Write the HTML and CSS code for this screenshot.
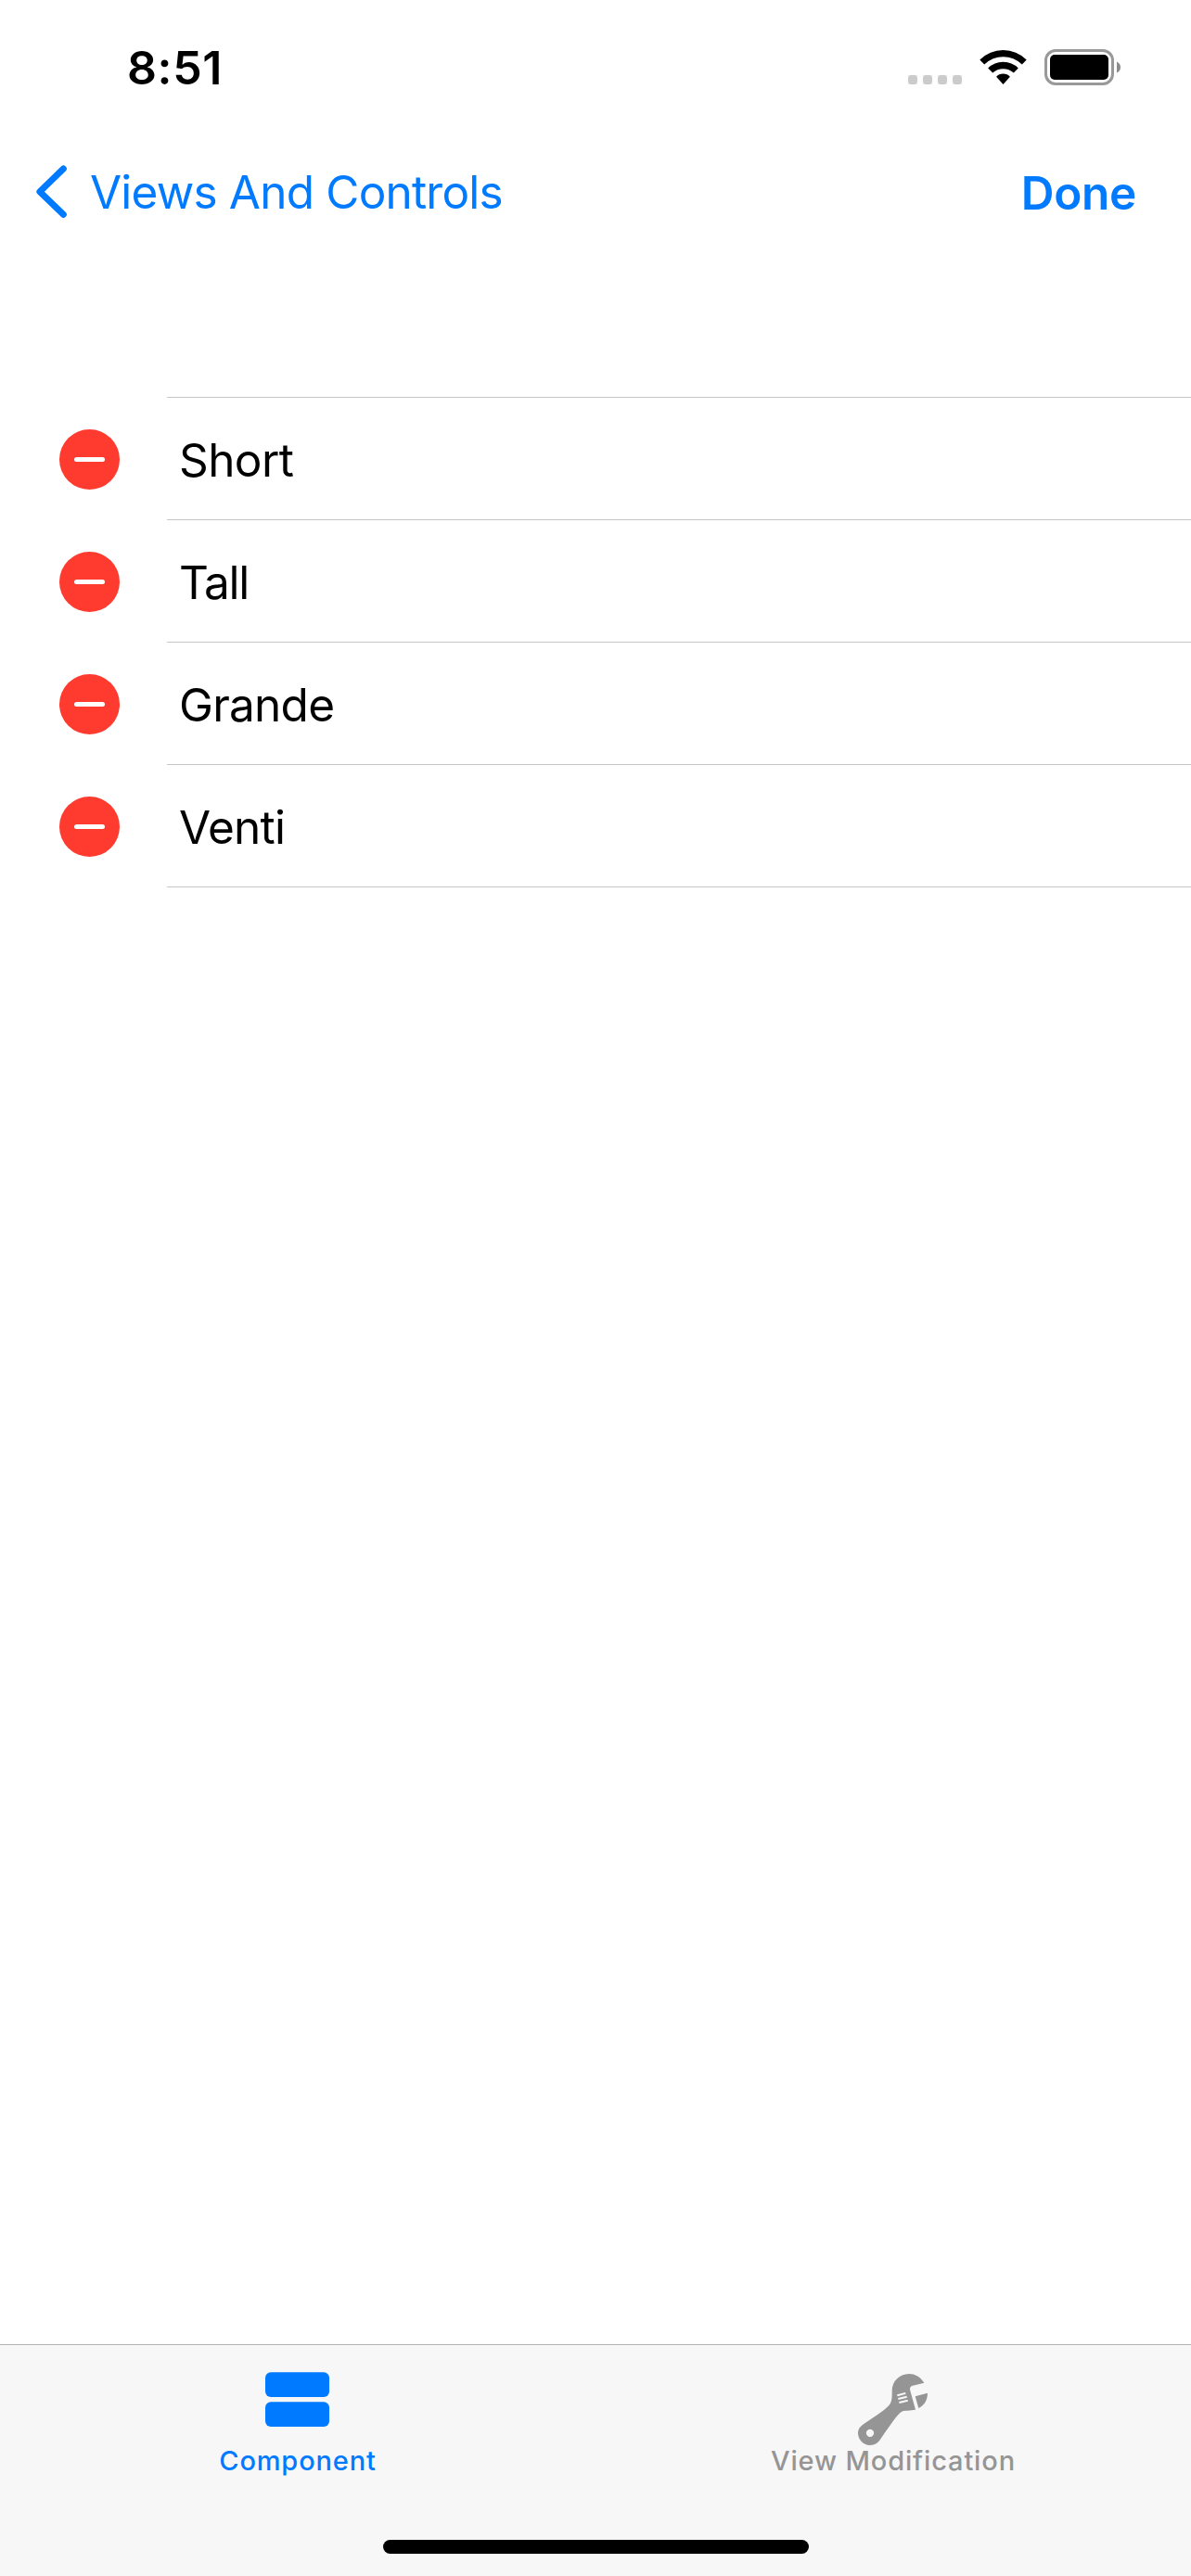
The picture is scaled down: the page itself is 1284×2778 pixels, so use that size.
FILE: index.html
```html
<!DOCTYPE html>
<html lang="en">
<head>
<meta charset="utf-8">
<title>Sizes</title>
<link rel="stylesheet" href="styles.css">
</head>
<body>
<div class="screen">
  <header class="status">
    <span class="clock">8:51</span>
    <svg class="indicators" width="230" height="40" viewBox="979 53 230 40" aria-hidden="true">
      <g fill="#cbcbcb"><rect x="979" y="81" width="10" height="10" rx="3"/><rect x="995" y="81" width="10" height="10" rx="3"/><rect x="1011" y="81" width="10" height="10" rx="3"/><rect x="1027" y="81" width="10" height="10" rx="3"/></g>
      <path d="M1056.300 64.600Q1067 54 1081.500 54Q1096 54 1106.700 64.600L1101.800 69.500Q1093 61.300 1081.500 61.300Q1070 61.300 1061.200 69.500Z"/>
      <path d="M1065.200 73.500Q1072 66.800 1081.500 66.800Q1091 66.800 1097.800 73.500L1092.800 78.500Q1088 74.200 1081.500 74.200Q1075 74.200 1070.200 78.500Z"/>
      <path d="M1074.100 82.700Q1077 79.600 1081.500 79.600Q1086 79.600 1088.900 82.700L1081.500 91Z"/>
      <rect x="1127.500" y="54.500" width="72" height="36" rx="10.500" fill="none" stroke="#999" stroke-width="3"/>
      <rect x="1132" y="59" width="63" height="27" rx="5"/>
      <path d="M1204 66.500Q1208 68.500 1208 72.500Q1208 76.500 1204 78.500Z" fill="#8c8c8c"/>
    </svg>
  </header>
  <nav class="navbar">
    <a class="back">
      <svg class="chevron" width="34" height="58" viewBox="0 0 34 58" aria-hidden="true"><path d="M29.300 4L3.900 28.700L29.300 53.300" fill="none" stroke="#007aff" stroke-width="7" stroke-linecap="round" stroke-linejoin="round"/></svg>
      <span class="back-label">Views And Controls</span>
    </a>
    <a class="done">Done</a>
  </nav>
  <ul class="list">
    <li class="row"><span class="delete"></span><span class="cell short">Short</span></li>
    <li class="row"><span class="delete"></span><span class="cell tall">Tall</span></li>
    <li class="row"><span class="delete"></span><span class="cell grande">Grande</span></li>
    <li class="row"><span class="delete"></span><span class="cell venti">Venti</span></li>
  </ul>
  <footer class="tabbar">
    <div class="tabs">
      <a class="tab active">
        <span class="icon"><svg width="70" height="59" viewBox="0 0 70 59" aria-hidden="true"><rect y="0.300" width="69" height="26.700" rx="6"/><rect y="32.300" width="69" height="26.700" rx="6"/></svg></span>
        <span class="label">Component</span>
      </a>
      <a class="tab">
        <span class="icon wrench"><svg width="76" height="77" viewBox="375 150 228 231" aria-hidden="true"><path fill-rule="evenodd" d="M589 179C577 160 560 150 540 150C508 151 485 174 485 205C485 224 485 237 479 247C468 264 434 285 397 310C382 320 375 328 375 343C376 364 393 381 414 381C428 381 438 375 446 364C468 332 493 294 511 276C518 269 525 269 535 269L561 266L543 201Q542 190 552 188ZM501 217L528 210L530 215L503 223ZM504 228L532 221L534 227L506 234ZM507 240L535 233L537 239L509 246ZM414 329A12.500 12.500 0 1 0 414 354A12.500 12.500 0 1 0 414 329ZM560 223L600 212C600 235 589 252 571 261Z"/></svg></span>
        <span class="label">View Modification</span>
      </a>
    </div>
    <div class="home"></div>
  </footer>
</div>
</body>
</html>
```
FILE: styles.css
```css
* { box-sizing: border-box; }
body { margin: 0; background: #fff; color: #000; font-family: Inter, "Liberation Sans", sans-serif; }
.screen { width: 1284px; height: 2778px; display: flex; flex-direction: column; overflow: hidden; }
.status { height: 141px; padding: 53px 75px 0 137px; display: flex; justify-content: space-between; align-items: flex-start; }
.clock { font-size: 50px; font-weight: 600; line-height: 40px; letter-spacing: 0.6px; }
.indicators { display: block; }
.navbar { height: 132px; padding: 0 59px 0 39px; display: flex; justify-content: space-between; align-items: center; color: #007aff; font-size: 49.5px; line-height: 60px; }
.back { display: flex; align-items: center; gap: 24px; }
.chevron { display: block; }
.back-label { letter-spacing: -0.8px; }
.done { font-weight: 600; letter-spacing: -0.3px; padding-top: 2px; }
.list { list-style: none; margin: 155px 0 0; padding: 0; }
.row { height: 132px; display: flex; align-items: stretch; padding-left: 64px; }
.delete { width: 65px; height: 65px; margin: 35px 51px 0 0; border-radius: 50%; background: #ff3b30; display: flex; align-items: center; justify-content: center; }
.delete::before { content: ""; width: 33px; height: 5px; border-radius: 2.5px; background: #fff; }
.cell { flex: 1; padding-left: 13px; border-top: 1px solid #c6c6c8; font-size: 49.5px; line-height: 134px; letter-spacing: -0.75px; }
.short { letter-spacing: -0.6px; }
.tall { letter-spacing: -1.3px; }
.row:last-child { height: 133px; }
.row:last-child .cell { border-bottom: 1px solid #c6c6c8; }
.tabbar { margin-top: auto; height: 250px; border-top: 1px solid #b2b2b2; background: #f7f7f7; display: flex; flex-direction: column; }
.tabs { display: grid; grid-template-columns: 1fr 1fr; }
.tab { display: flex; flex-direction: column; align-items: center; color: #959595; fill: #959595; }
.active { color: #007aff; fill: #007aff; }
.icon { height: 106px; padding-top: 29px; }
.wrench { padding-top: 31px; }
.icon svg { display: block; }
.label { font-size: 29px; font-weight: 500; line-height: 37px; letter-spacing: 0.85px; }
.home { width: 459px; height: 15px; border-radius: 7.5px; background: #000; margin: auto auto 24px 413px; }
```
